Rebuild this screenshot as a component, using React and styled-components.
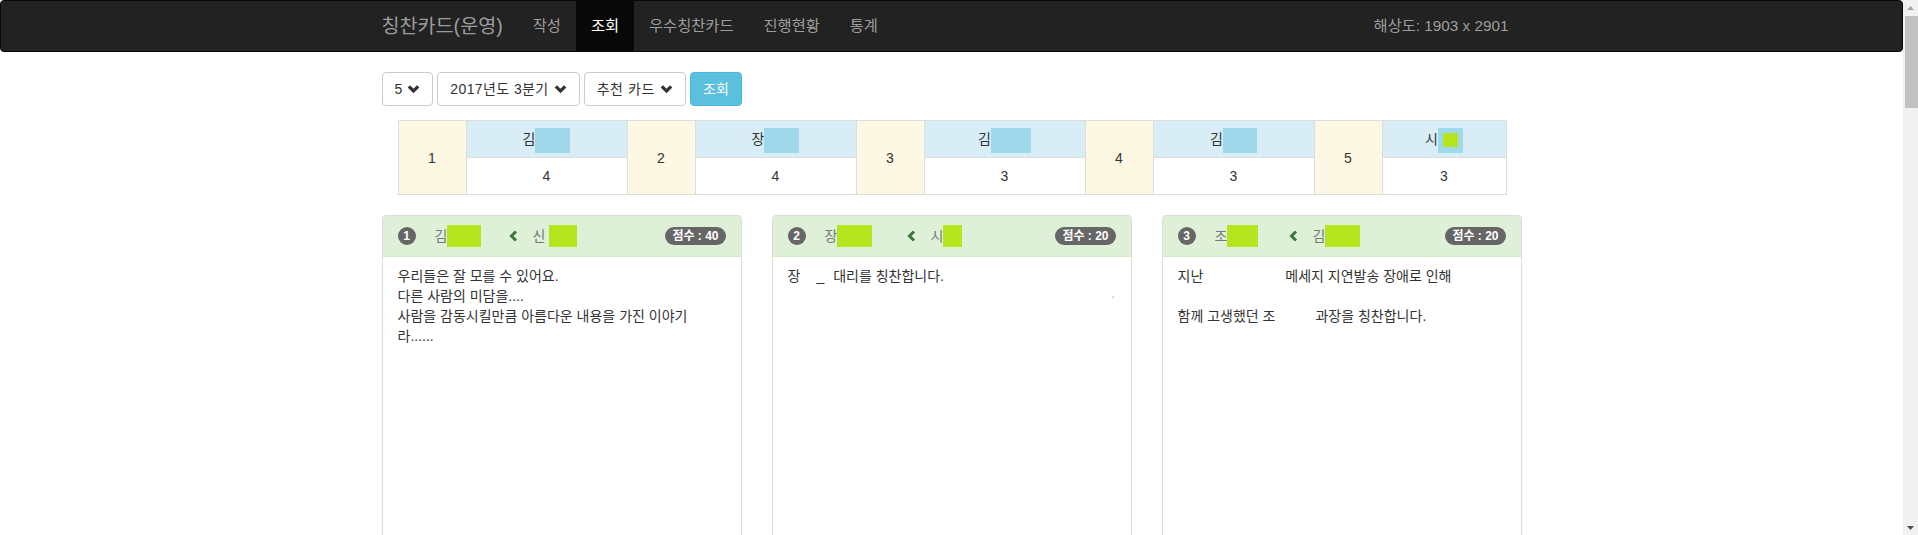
import React from 'react';
import styled, { createGlobalStyle } from 'styled-components';

const GlobalStyle = createGlobalStyle`
  html, body { margin: 0; padding: 0; height: 100%; overflow: hidden; background: #fff; }
  body {
    font-family: "Liberation Sans", "Noto Sans CJK KR", sans-serif;
    font-size: 14px;
    line-height: 20px;
    color: #333;
  }
  *, *::before, *::after { box-sizing: border-box; }
`;

const Shell = styled.div`
  display: flex;
  height: 535px;
`;

const Page = styled.div`
  flex: 1;
  min-width: 0;
  height: 535px;
  overflow: hidden;
`;

const ScrollTrack = styled.div`
  flex: none;
  width: 15px;
  background: #f1f1f1;
  display: flex;
  flex-direction: column;
`;

const ScrollArrow = styled.div`
  height: 15px;
  display: flex;
  align-items: center;
  justify-content: center;
`;

const ScrollThumb = styled.div`
  height: 92px;
  margin: 1px 0 0 2px;
  background: #c1c1c1;
`;

const ScrollSpacer = styled.div`
  flex: 1;
`;

const Navbar = styled.nav`
  background: #222;
  border: 1px solid #080808;
  border-radius: 4px;
  margin-bottom: 20px;
  font-size: 15.3px;
`;

const Container = styled.div`
  width: 1170px;
  margin: 0 auto;
  padding: 0 15px;
`;

const NavInner = styled(Container)`
  display: flex;
  align-items: stretch;
  height: 50px;
`;

const Brand = styled.a`
  font-size: 19.6px;
  line-height: 20px;
  padding: 15px;
  margin-left: -15px;
  color: #9d9d9d;
  text-decoration: none;
`;

const NavItem = styled.a`
  padding: 15px;
  line-height: 20px;
  color: ${(p) => (p.$active ? '#fff' : '#9d9d9d')};
  background: ${(p) => (p.$active ? '#080808' : 'transparent')};
  text-decoration: none;
`;

const NavText = styled.p`
  margin: 15px 13px 15px auto;
  line-height: 20px;
  color: #9d9d9d;
`;

const Controls = styled.div`
  display: flex;
  gap: 4px;
`;

const Btn = styled.button`
  font: inherit;
  display: inline-flex;
  align-items: center;
  gap: 5px;
  height: 34px;
  padding: 6px 12px;
  border: 1px solid ${(p) => (p.$info ? '#46b8da' : '#ccc')};
  background: ${(p) => (p.$info ? '#5bc0de' : '#fff')};
  color: ${(p) => (p.$info ? '#fff' : '#333')};
  border-radius: 4px;
  letter-spacing: ${(p) => p.$ls || 0}px;
  cursor: pointer;
`;

const RankTable = styled.table`
  margin: 14px 0 20px 16px;
  width: 1109px;
  border-collapse: collapse;
  table-layout: fixed;
`;

const Col = styled.col`
  width: ${(p) => (p.$w ? `${p.$w}px` : 'auto')};
`;

const RankCell = styled.td`
  background: #fcf8e3;
  border: 1px solid #ddd;
  text-align: center;
  vertical-align: middle;
  padding: 8px;
  line-height: 20px;
`;

const NameCell = styled.td`
  background: ${(p) => (p.$head ? '#d9edf7' : '#fff')};
  border: 1px solid #ddd;
  text-align: center;
  vertical-align: middle;
  padding: 8px;
  line-height: 20px;
  white-space: nowrap;
`;

const Redact = styled.span`
  display: inline-flex;
  align-items: center;
  justify-content: center;
  vertical-align: middle;
  width: ${(p) => p.$w}px;
  height: ${(p) => p.$h}px;
  background: ${(p) => p.$c};
  margin: ${(p) => -(p.$h - 20) / 2 - 1}px 0 ${(p) => -(p.$h - 20) / 2 - 1}px ${(p) => p.$ml || 0}px;
`;

const InnerMark = styled.span`
  width: 15px;
  height: 14px;
  background: #b5e61d;
`;

const Cards = styled.div`
  display: grid;
  grid-template-columns: repeat(3, 360px);
  column-gap: 30px;
`;

const Panel = styled.div`
  border: 1px solid #dcdcdc;
  border-radius: 4px;
  background: #fff;
  overflow: hidden;
`;

const PanelHeading = styled.div`
  background: #dff0d8;
  border-bottom: 1px solid #d6e9c6;
  padding: 10px 15px;
  height: 41px;
  display: flex;
  align-items: center;
  color: #3c763d;
`;

const NumBadge = styled.span`
  width: 18px;
  height: 18px;
  border-radius: 50%;
  background: #666;
  color: #fff;
  font-size: 12px;
  font-weight: bold;
  display: inline-flex;
  align-items: center;
  justify-content: center;
  line-height: 1;
  flex: none;
`;

const Person = styled.span`
  display: inline-flex;
  align-items: center;
  color: #777;
  margin-left: ${(p) => p.$ml}px;
  margin-right: ${(p) => p.$mr || 0}px;
`;

const ScoreBadge = styled.span`
  margin-left: auto;
  height: 18px;
  padding: 0 7px;
  border-radius: 10px;
  background: #666;
  color: #fff;
  font-size: 12px;
  font-weight: bold;
  line-height: 18px;
  white-space: nowrap;
`;

const PanelBody = styled.div`
  padding: 9px 15px;
  height: 340px;
  color: #333;
`;

const Line = styled.div`
  min-height: 20px;
  white-space: nowrap;
  text-align: ${(p) => (p.$right ? 'right' : 'left')};
  color: ${(p) => (p.$faint ? '#bbb' : 'inherit')};
`;

const Blank = styled.span`
  display: inline-block;
  width: ${(p) => p.$w}px;
`;

const Chevron = ({ dir = 'down', color = '#333' }) =>
  dir === 'down' ? (
    <svg width="13" height="10" viewBox="0 0 13 10">
      <polyline points="1.8,2.3 6.5,7 11.2,2.3" fill="none" stroke={color} strokeWidth="3.2" />
    </svg>
  ) : (
    <svg width="9" height="12" viewBox="0 0 9 12">
      <polyline points="7,1.5 2.5,6 7,10.5" fill="none" stroke={color} strokeWidth="3" />
    </svg>
  );

const ranking = [
  { rank: 1, name: '김', w: 35, score: 4 },
  { rank: 2, name: '장', w: 35, score: 4 },
  { rank: 3, name: '김', w: 40, score: 3 },
  { rank: 4, name: '김', w: 34, score: 3 },
  { rank: 5, name: '시', w: 25, score: 3, inner: true },
];

const cards = [
  {
    no: 1,
    from: '김', fromW: 34, gap: 28,
    to: '신', toW: 28, toGap: 4,
    score: 40,
    lines: [
      ['우리들은 잘 모를 수 있어요.'],
      ['다른 사람의 미담을....'],
      ['사람을 감동시킬만큼 아름다운 내용을 가진 이야기'],
      ['라......'],
    ],
  },
  {
    no: 2,
    from: '장', fromW: 35, gap: 35,
    to: '시', toW: 19, toGap: 0,
    score: 20,
    lines: [['장', { blank: 16 }, '_', { blank: 9 }, '대리를 칭찬합니다.'], { dot: true }],
  },
  {
    no: 3,
    from: '조', fromW: 31, gap: 31,
    to: '김', toW: 35, toGap: 0,
    score: 20,
    lines: [
      ['지난', { blank: 82 }, '메세지 지연발송 장애로 인해'],
      [],
      ['함께 고생했던 조', { blank: 40 }, '과장을 칭찬합니다.'],
    ],
  },
];

export default function App() {
  return (
    <>
      <GlobalStyle />
      <Shell>
        <Page>
          <Navbar>
            <NavInner>
              <Brand>칭찬카드(운영)</Brand>
              <NavItem>작성</NavItem>
              <NavItem $active>조회</NavItem>
              <NavItem>우수칭찬카드</NavItem>
              <NavItem>진행현황</NavItem>
              <NavItem>통계</NavItem>
              <NavText>해상도: 1903 x 2901</NavText>
            </NavInner>
          </Navbar>

          <Container>
            <Controls>
              <Btn>5<Chevron /></Btn>
              <Btn $ls={0.4}>2017년도 3분기<Chevron /></Btn>
              <Btn $ls={0.6}>추천 카드<Chevron /></Btn>
              <Btn $info>조회</Btn>
            </Controls>

            <RankTable>
              <colgroup>
                {ranking.map((r, i) => (
                  <React.Fragment key={r.rank}>
                    <Col $w={68} />
                    <Col $w={i === ranking.length - 1 ? 0 : 161} />
                  </React.Fragment>
                ))}
              </colgroup>
              <tbody>
                <tr>
                  {ranking.map((r) => (
                    <React.Fragment key={r.rank}>
                      <RankCell rowSpan={2}>{r.rank}</RankCell>
                      <NameCell $head>
                        {r.name}
                        <Redact $w={r.w} $h={25} $c="#9fd8eb">
                          {r.inner && <InnerMark />}
                        </Redact>
                      </NameCell>
                    </React.Fragment>
                  ))}
                </tr>
                <tr>
                  {ranking.map((r) => (
                    <NameCell key={r.rank}>{r.score}</NameCell>
                  ))}
                </tr>
              </tbody>
            </RankTable>

            <Cards>
              {cards.map((c) => (
                <Panel key={c.no}>
                  <PanelHeading>
                    <NumBadge>{c.no}</NumBadge>
                    <Person $ml={19} $mr={c.gap}>
                      {c.from}
                      <Redact $w={c.fromW} $h={22} $c="#b5e61d" />
                    </Person>
                    <Chevron dir="left" color="#3c763d" />
                    <Person $ml={14}>
                      {c.to}
                      <Redact $w={c.toW} $h={22} $c="#b5e61d" $ml={c.toGap} />
                    </Person>
                    <ScoreBadge>점수 : {c.score}</ScoreBadge>
                  </PanelHeading>
                  <PanelBody>
                    {c.lines.map((ln, i) =>
                      Array.isArray(ln) ? (
                        <Line key={i}>
                          {ln.map((part, j) =>
                            typeof part === 'string' ? (
                              <React.Fragment key={j}>{part}</React.Fragment>
                            ) : (
                              <Blank key={j} $w={part.blank} />
                            )
                          )}
                        </Line>
                      ) : (
                        <Line key={i} $right $faint>·</Line>
                      )
                    )}
                  </PanelBody>
                </Panel>
              ))}
            </Cards>
          </Container>
        </Page>
        <ScrollTrack>
          <ScrollArrow>
            <svg width="7" height="4" viewBox="0 0 7 4"><polygon points="0,4 3.5,0 7,4" fill="#a3a3a3" /></svg>
          </ScrollArrow>
          <ScrollThumb />
          <ScrollSpacer />
          <ScrollArrow>
            <svg width="7" height="4" viewBox="0 0 7 4"><polygon points="0,0 3.5,4 7,0" fill="#505050" /></svg>
          </ScrollArrow>
        </ScrollTrack>
      </Shell>
    </>
  );
}
